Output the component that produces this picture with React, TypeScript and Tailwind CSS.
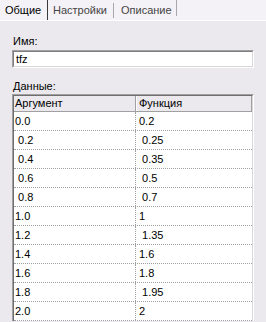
import React from 'react';

// Значения таблицы (ведущий пробел — как в исходных данных)
const ROWS: [string, string][] = [
  ['0.0', '0.2'],
  [' 0.2', ' 0.25'],
  [' 0.4', ' 0.35'],
  [' 0.6', ' 0.5'],
  [' 0.8', ' 0.7'],
  ['1.0', '1'],
  ['1.2', ' 1.35'],
  ['1.4', '1.6'],
  ['1.6', '1.8'],
  ['1.8', ' 1.95'],
  ['2.0', '2'],
];

const App: React.FC = () => {
  return (
    <div className="w-[266px] h-[322px] overflow-hidden bg-[#ebe9ed] text-black text-[11px] leading-[13px] font-['Liberation_Sans',Arial,sans-serif]">
      {/* вкладки */}
      <div className="flex h-[21px] bg-[#f4f2f6] border-b border-white">
        <div className="w-[48px] pl-[5px] flex items-center border-r border-[#3a3a3a]">Общие</div>
        <div className="w-[66px] pl-[5px] flex items-center justify-between text-[#444]">
          <span>Настройки</span>
          <span className="w-px h-[15px] bg-[#a8a8a8]" />
        </div>
        <div className="w-[63px] pl-[7px] flex items-center justify-between text-[#444]">
          <span>Описание</span>
          <span className="w-px h-[16px] bg-[#a8a8a8] self-start" />
        </div>
      </div>

      <div className="px-[12px]">
        <div className="mt-[14px] pl-[1px]">Имя:</div>
        <div className="mt-[2px] h-[18px] border-t border-l border-[#a0a0a0] border-r border-b border-r-white border-b-white">
          <div className="h-full bg-white border-t border-l border-[#7f7f7f] border-r border-b border-r-[#d8d8d8] border-b-[#d8d8d8] pl-[2px] flex items-center">
            tfz
          </div>
        </div>

        <div className="mt-[12px] pl-[1px]">Данные:</div>
        <div className="mt-[1px] border-t border-l border-[#a0a0a0] border-r border-r-white">
          <div className="bg-white border-t border-l border-[#6f6f6f] border-r border-r-[#d8d8d8]">
            <div className="flex h-[16px] bg-[#ebe9ed] border-b border-[#a0a0a0]">
              <div className="w-[122px] pl-[1px] flex items-center border-r border-[#a0a0a0]">Аргумент</div>
              <div className="w-px bg-white" />
              <div className="flex-1 pl-[2px] flex items-center border-r border-[#a0a0a0]">Функция</div>
            </div>
            {ROWS.map(([arg, val], i) => (
              <div key={i} className="flex h-[19px] border-b border-dotted border-[#a0a0a0]">
                <div className="w-[122px] pl-[1px] flex items-center whitespace-pre border-r border-dotted border-[#a0a0a0]">{arg}</div>
                <div className="flex-1 pl-[3px] flex items-center whitespace-pre">{val}</div>
              </div>
            ))}
          </div>
        </div>
      </div>
    </div>
  );
};

export default App;
